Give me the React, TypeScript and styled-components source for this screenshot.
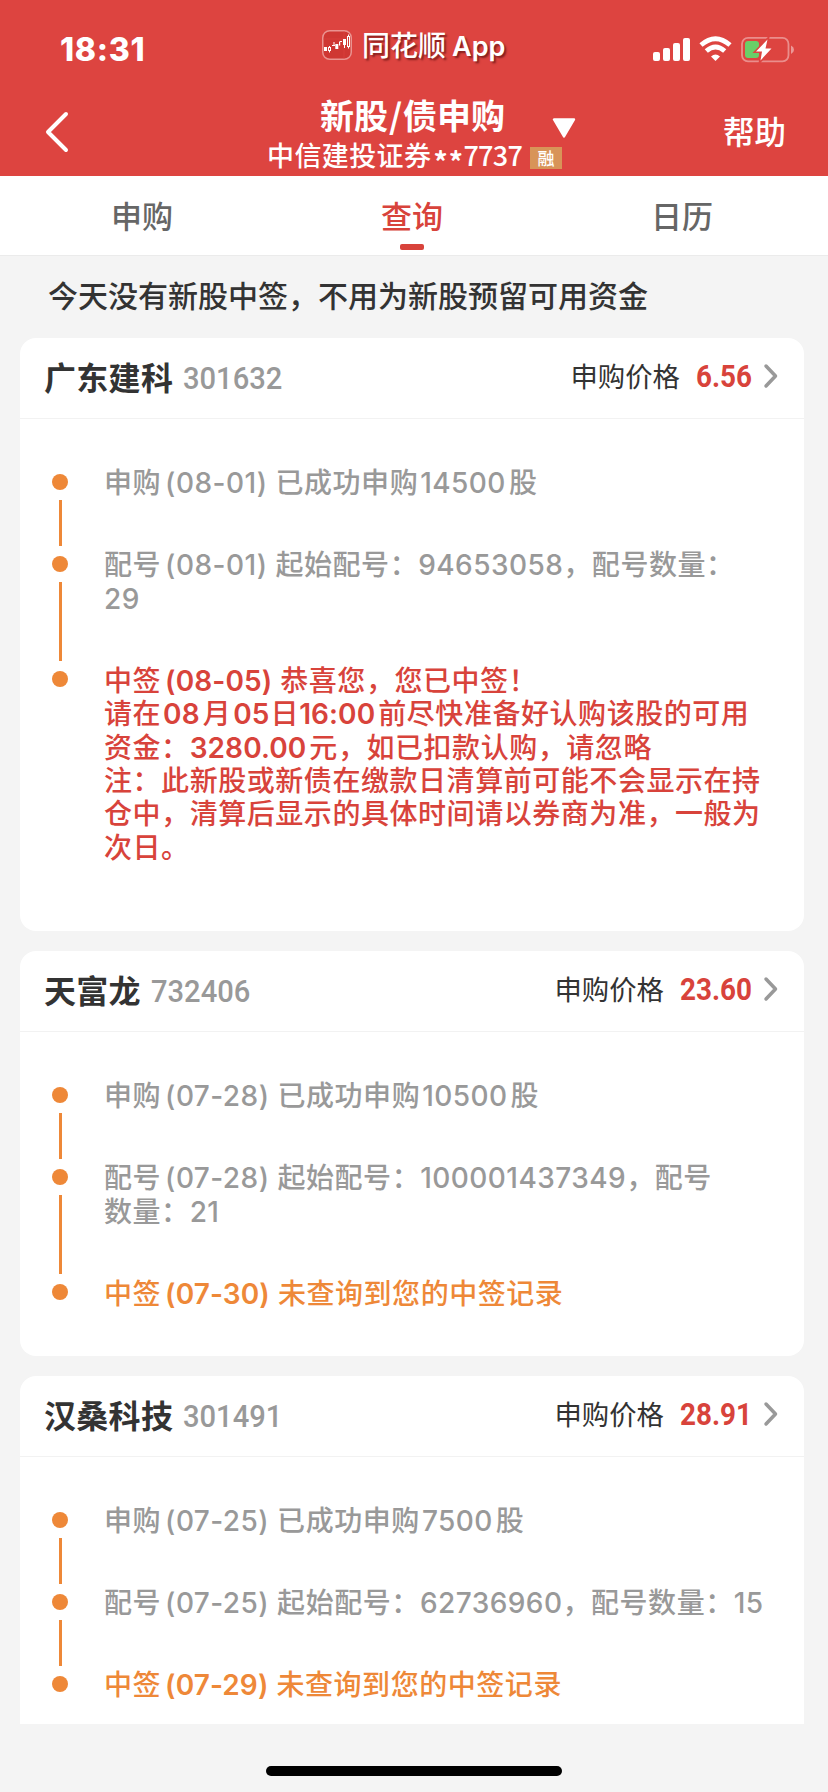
import React from "react";
import styled, { createGlobalStyle } from "styled-components";

const cjk = `"Noto Sans CJK SC", sans-serif`;
const mixed = `Inter, "Noto Sans CJK SC", sans-serif`;

const colors = {
  brand: "#dd4440",
  red: "#d8433b",
  orange: "#ee8838",
  ink: "#333333",
  grey: "#999999",
  page: "#f4f4f4",
};

const GlobalStyle = createGlobalStyle`
  * { box-sizing: border-box; }
  body { margin: 0; background: ${colors.page}; }
`;

const Screen = styled.div`
  width: 828px;
  height: 1792px;
  display: flex;
  flex-direction: column;
  overflow: hidden;
  background: ${colors.page};
  font-family: ${cjk};
  font-weight: 500;
  white-space: nowrap;
`;

const Header = styled.header`
  height: 176px;
  flex: none;
  display: flex;
  flex-direction: column;
  background: ${colors.brand};
  color: #fff;
`;

const StatusBar = styled.div`
  height: 92px;
  flex: none;
  display: grid;
  grid-template-columns: 322px 1fr 175px;
`;

const Clock = styled.div`
  padding: 30px 0 0 60px;
  font: 800 32px/40px Inter, sans-serif;
  letter-spacing: 0.7px;
`;

const Source = styled.div`
  display: flex;
  padding-top: 30px;
`;

const SourceName = styled.div`
  margin-left: 10px;
  font: 500 28px/32px ${mixed};
  text-shadow: 2px 2px 2px rgba(60, 0, 0, 0.55);
`;

const SourceLatin = styled.span`
  margin-left: 6px;
  font-size: 27px;
  font-weight: 600;
`;

const StatusIcons = styled.div`
  padding-top: 36px;
`;

const NavBar = styled.div`
  height: 84px;
  display: grid;
  grid-template-columns: 268px 1fr 106px;
`;

const BackButton = styled.div`
  padding: 17px 0 0 42px;
`;

const NavCenter = styled.div`
  display: flex;
  flex-direction: column;
`;

const TitleRow = styled.div`
  height: 45px;
  display: flex;
  padding-left: 52px;
`;

const Title = styled.div`
  width: 232px;
  font-size: 34px;
  line-height: 46px;
  font-weight: 700;
`;

const Slash = styled.span`
  display: inline-block;
  width: 15px;
  text-align: center;
`;

const Triangle = styled.svg`
  margin-top: 26px;
`;

const AccountRow = styled.div`
  height: 39px;
  display: flex;
`;

const Account = styled.div`
  width: 262px;
  margin-left: -1px;
  font-size: 27px;
  line-height: 36px;
  letter-spacing: 0.4px;
`;

const Stars = styled.span`
  display: inline-block;
  width: 32px;
  font-size: 28px;
  font-weight: 700;
  line-height: 1;
  letter-spacing: 1.2px;
  padding-left: 2px;
  vertical-align: -7px;
`;

const AccountDigits = styled.span`
  letter-spacing: -0.7px;
`;

const Badge = styled.div`
  width: 32px;
  height: 22px;
  margin: 10px 0 0 1px;
  background: #d89458;
  font-size: 17px;
  line-height: 21px;
  text-align: center;
`;

const Help = styled.div`
  padding-left: 1px;
  font-size: 31.5px;
  line-height: 76px;
`;

const Tabs = styled.nav`
  height: 80px;
  flex: none;
  display: grid;
  grid-template-columns: repeat(3, 270px);
  padding: 0 11px 0 7px;
  background: #fff;
  border-bottom: 1px solid #ebebeb;
`;

const Tab = styled.div<{ $active?: boolean }>`
  display: flex;
  flex-direction: column;
  align-items: center;
  font-size: 31px;
  line-height: 68px;
  padding-top: 5px;
  color: ${(p) => (p.$active ? colors.red : "#666")};

  &::after {
    content: "";
    width: 24px;
    height: 6px;
    margin-top: -5px;
    border-radius: 2px;
    background: ${(p) => (p.$active ? colors.red : "transparent")};
  }
`;

const Notice = styled.div`
  height: 82px;
  flex: none;
  padding-left: 48px;
  font-size: 30px;
  line-height: 76px;
  color: ${colors.ink};
`;

const CardList = styled.main`
  height: 1386px;
  flex: none;
  overflow: hidden;
  padding: 0 24px 0 20px;
  display: flex;
  flex-direction: column;
  gap: 20px;
`;

const Card = styled.section<{ $height: number }>`
  height: ${(p) => p.$height}px;
  flex: none;
  border-radius: 16px;
  background: #fff;
`;

const CardHeader = styled.div`
  height: 81px;
  display: flex;
  align-items: center;
  padding: 0 25px 4px 24px;
  border-bottom: 1px solid #f2f2f2;
`;

const StockName = styled.div`
  font-size: 32px;
  line-height: 44px;
  letter-spacing: 0.3px;
  font-weight: 700;
  color: ${colors.ink};
`;

const StockCode = styled.div`
  flex: 1;
  margin: 4px 0 0 10px;
  font: 500 32px/40px Roboto, sans-serif;
  color: ${colors.grey};
  transform: scaleX(0.91);
  transform-origin: left;
`;

const PriceLabel = styled.div`
  margin-top: -2px;
  font-size: 27.4px;
  line-height: 44px;
  font-weight: 400;
  color: ${colors.ink};
`;

const Price = styled.div<{ $width: number }>`
  width: ${(p) => p.$width}px;
  margin-left: 16px;
  font: 700 32px/40px Roboto, sans-serif;
  color: ${colors.red};

  span {
    display: inline-block;
    transform: scaleX(0.87);
    transform-origin: left;
  }
`;

const Timeline = styled.div`
  padding: 46px 0 0 32px;
`;

const Step = styled.div`
  display: flex;
`;

const Rail = styled.div`
  width: 16px;
  display: flex;
  flex-direction: column;
  align-items: center;
  padding-top: 9px;
`;

const Dot = styled.div`
  width: 16px;
  height: 16px;
  flex: none;
  border-radius: 50%;
  background: ${colors.orange};
`;

const Connector = styled.div`
  width: 3px;
  flex: 1;
  margin: 10px 0 1px 1px;
  background: ${colors.orange};
`;

const StepText = styled.div<{ $tone: string }>`
  margin-left: 36px;
  padding: 2.4px 0 46.2px;
  font: 500 28px/33.4px ${mixed};
  letter-spacing: 0.55px;
  color: ${(p) => p.$tone};
`;

const Latin = styled.span<{ $strong: boolean }>`
  margin: 0 3px 0 2px;
  font-weight: ${(p) => (p.$strong ? 600 : 550)};
  letter-spacing: ${(p) => (p.$strong ? 0.1 : 0.45)}px;
`;

type StepData = { tone?: string; lines: string[] };
type Stock = {
  name: string;
  code: string;
  price: string;
  priceWidth: number;
  height: number;
  steps: StepData[];
};

const stocks: Stock[] = [
  {
    name: "广东建科",
    code: "301632",
    price: "6.56",
    priceWidth: 66,
    height: 593,
    steps: [
      { lines: ["申购(08-01) 已成功申购14500股"] },
      { lines: ["配号(08-01) 起始配号：94653058，配号数量：", "29"] },
      {
        tone: colors.red,
        lines: [
          "中签(08-05) 恭喜您，您已中签！",
          "请在08月05日16:00前尽快准备好认购该股的可用",
          "资金：3280.00元，如已扣款认购，请忽略",
          "注：此新股或新债在缴款日清算前可能不会显示在持",
          "仓中，清算后显示的具体时间请以券商为准，一般为",
          "次日。",
        ],
      },
    ],
  },
  {
    name: "天富龙",
    code: "732406",
    price: "23.60",
    priceWidth: 82,
    height: 405,
    steps: [
      { lines: ["申购(07-28) 已成功申购10500股"] },
      { lines: ["配号(07-28) 起始配号：100001437349，配号", "数量：21"] },
      { tone: colors.orange, lines: ["中签(07-30) 未查询到您的中签记录"] },
    ],
  },
  {
    name: "汉桑科技",
    code: "301491",
    price: "28.91",
    priceWidth: 82,
    height: 405,
    steps: [
      { lines: ["申购(07-25) 已成功申购7500股"] },
      { lines: ["配号(07-25) 起始配号：62736960，配号数量：15"] },
      { tone: colors.orange, lines: ["中签(07-29) 未查询到您的中签记录"] },
    ],
  },
];

const HomeArea = styled.div`
  height: 68px;
  flex: none;
  padding: 42px 0 0 266px;
`;

const HomeIndicator = styled.div`
  width: 296px;
  height: 10px;
  border-radius: 5px;
  background: #000;
`;

const MixedLine = ({ text, strong }: { text: string; strong: boolean }) => (
  <div>
    {text.split(/([\x21-\x7e]+)/).map((part, i, all) => {
      if (i % 2 === 0) return part;
      const prev = all[i - 1];
      const next = all[i + 1];
      const style = {
        marginLeft: prev === "" || /[：，]$/.test(prev) ? 0 : prev === "日" ? 0 : part.startsWith("(") ? 4 : undefined,
        marginRight: next === "" || /^[：， ]/.test(next) ? 0 : next === "日" ? 1 : undefined,
      };
      return (
        <Latin key={i} $strong={strong} style={style}>
          {part}
        </Latin>
      );
    })}
  </div>
);

const AppIcon = () => (
  <svg width="30" height="30" viewBox="0 0 30 30">
    <rect x="0.75" y="0.75" width="28.5" height="28.5" rx="7" fill="#cf3733" stroke="#ea9390" strokeWidth="1.5" />
    <path d="M1.5 9H28.5M22 1.5V28.5" stroke="#dd4440" strokeWidth="0.5" />
    <g fill="#fff">
      <rect x="2" y="17" width="3" height="4" />
      <rect x="13.3" y="14" width="3" height="5" />
      <rect x="21" y="9" width="3" height="6" />
      <rect x="22" y="14" width="1" height="4" />
      <rect x="11.5" y="12" width="1" height="3" />
      <rect x="17" y="11.5" width="1.2" height="4" />
    </g>
    <g fill="none" stroke="#fff">
      <rect x="6.5" y="17.5" width="2" height="3" />
      <path d="M7.5 16v1.5M7.5 20.5v2M10 15.5h3M18 11.5h2M26.5 4.5v2M26.5 16.5v2" />
      <rect x="25.5" y="6.5" width="2" height="10" />
    </g>
  </svg>
);

const DeviceIcons = () => (
  <svg width="142" height="28" viewBox="0 0 142 28">
    <g fill="#fff">
      <rect x="0" y="16" width="7" height="9" rx="2" />
      <rect x="10" y="12" width="7" height="13" rx="2" />
      <rect x="20" y="7" width="7" height="18" rx="2" />
      <rect x="30" y="2" width="7" height="23" rx="2" />
      <path d="M62.5 25 L58 20.4 Q62.5 16.8 67 20.4 Z" />
    </g>
    <path d="M48 9 Q62.5 -3.6 77 9" fill="none" stroke="#fff" strokeWidth="4.8" />
    <path d="M53.3 15 Q62.5 7 71.7 15" fill="none" stroke="#fff" strokeWidth="4.8" />
    <rect x="89" y="1.9" width="46.5" height="23.4" rx="6" fill="none" stroke="#fff" strokeOpacity="0.4" strokeWidth="1.8" />
    <path d="M138 9.5 Q141 11 141 13.7 T138 18 Z" fill="#fff" fillOpacity="0.45" />
    <rect x="92" y="5" width="14" height="17" rx="3" fill="#69cf68" />
    <path
      d="M114.5 3.5 L103 15.5 H109 L107.5 24.5 L118.5 12.5 H112.5 Z"
      fill="#fff"
      stroke={colors.brand}
      strokeWidth="3"
      paintOrder="stroke"
    />
  </svg>
);

const Chevron = () => (
  <svg width="17" height="28" viewBox="0 0 17 28">
    <path d="M4 4 L13.5 14 L4 24" fill="none" stroke="#999" strokeWidth="3.5" strokeLinecap="round" strokeLinejoin="round" />
  </svg>
);

export default function App() {
  return (
    <Screen>
      <GlobalStyle />
      <Header>
        <StatusBar>
          <Clock>18:31</Clock>
          <Source>
            <AppIcon />
            <SourceName>
              同花顺<SourceLatin>App</SourceLatin>
            </SourceName>
          </Source>
          <StatusIcons>
            <DeviceIcons />
          </StatusIcons>
        </StatusBar>
        <NavBar>
          <BackButton>
            <svg width="30" height="46" viewBox="0 0 30 46">
              <path d="M24 5 L6 23 L24 41" fill="none" stroke="#fff" strokeWidth="4" strokeLinecap="round" strokeLinejoin="round" />
            </svg>
          </BackButton>
          <NavCenter>
            <TitleRow>
              <Title>
                新股<Slash>/</Slash>债申购
              </Title>
              <Triangle width="24" height="20" viewBox="0 0 24 20">
                <path d="M2 1.5 H22 L12 18.5 Z" fill="#fff" stroke="#fff" strokeWidth="2.4" strokeLinejoin="round" />
              </Triangle>
            </TitleRow>
            <AccountRow>
              <Account>
                中信建投证券<Stars>**</Stars>
                <AccountDigits>7737</AccountDigits>
              </Account>
              <Badge>融</Badge>
            </AccountRow>
          </NavCenter>
          <Help>帮助</Help>
        </NavBar>
      </Header>
      <Tabs>
        <Tab>申购</Tab>
        <Tab $active>查询</Tab>
        <Tab>日历</Tab>
      </Tabs>
      <Notice>今天没有新股中签，不用为新股预留可用资金</Notice>
      <CardList>
        {stocks.map((stock) => (
          <Card key={stock.code} $height={stock.height}>
            <CardHeader>
              <StockName>{stock.name}</StockName>
              <StockCode>{stock.code}</StockCode>
              <PriceLabel>申购价格</PriceLabel>
              <Price $width={stock.priceWidth}>
                <span>{stock.price}</span>
              </Price>
              <Chevron />
            </CardHeader>
            <Timeline>
              {stock.steps.map((step, i) => (
                <Step key={i}>
                  <Rail>
                    <Dot />
                    {i < stock.steps.length - 1 && <Connector />}
                  </Rail>
                  <StepText $tone={step.tone ?? colors.grey}>
                    {step.lines.map((line) => (
                      <MixedLine key={line} text={line} strong={step.tone !== undefined} />
                    ))}
                  </StepText>
                </Step>
              ))}
            </Timeline>
          </Card>
        ))}
      </CardList>
      <HomeArea>
        <HomeIndicator />
      </HomeArea>
    </Screen>
  );
}
